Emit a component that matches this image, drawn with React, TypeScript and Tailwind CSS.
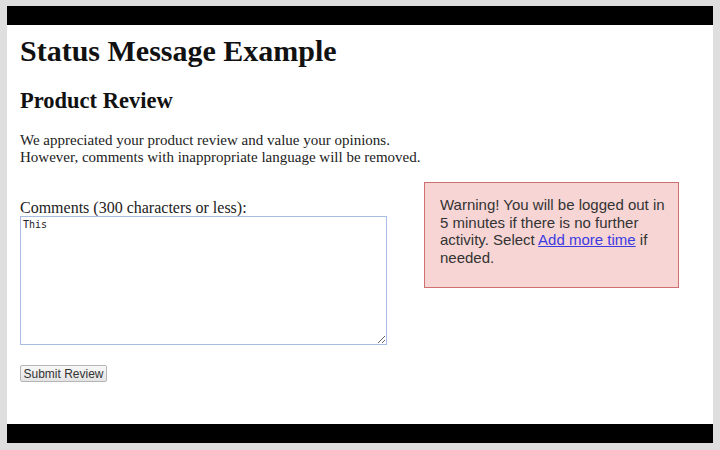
export default function App() {
  return (
    <div className="flex h-[450px] w-[720px] flex-col bg-[#dedede] pb-[7px] pl-[7px] pr-[7px] pt-[6px]">
      <div className="flex flex-1 flex-col bg-white">
        <div className="h-[19px] bg-black" />
        <div className="flex flex-1 flex-col pl-[13px] font-['Liberation_Serif',serif] text-[#111]">
          <h1 className="mt-[9px] text-[30px] leading-[34px] font-bold">Status Message Example</h1>
          <h2 className="mt-[20px] text-[22.5px] leading-[26px] font-bold">Product Review</h2>
          <p className="mt-[18px] text-[15px] leading-[17px] text-[#222]">
            We appreciated your product review and value your opinions.
            <br />
            However, comments with inappropriate language will be removed.
          </p>
          <div className="mt-[16px] flex">
            <div className="mt-[17px] flex flex-col">
              <label className="text-[16px] leading-[17px] text-[#222]">Comments (300 characters or less):</label>
              <textarea
                defaultValue="This"
                className="h-[129px] w-[367px] resize border border-[#a9bde2] px-[2px] py-[1px] font-['DejaVu_Sans_Mono',monospace] text-[10px] leading-[14px] text-[#222] outline-none"
              />
              <button className="mt-[20px] h-[17px] w-[87px] rounded-[2px] border border-[#b5b5b5] bg-gradient-to-b from-[#f8f8f8] to-[#e4e4e4] font-['Liberation_Sans',sans-serif] text-[12px] leading-[14px] text-[#333]">
                Submit Review
              </button>
            </div>
            <div className="ml-[37px] h-[106px] w-[255px] border border-[#cf6f6f] bg-[#f7d5d5] pl-[15px] pr-[6px] pt-[13px] font-['Liberation_Sans',sans-serif] text-[15px] leading-[17.5px] text-[#333]">
              Warning! You will be logged out in 5 minutes if there is no further activity. Select{' '}
              <a href="#" className="text-[#3b3be0] underline">
                Add more time
              </a>{' '}
              if needed.
            </div>
          </div>
        </div>
        <div className="h-[19px] bg-black" />
      </div>
    </div>
  );
}
